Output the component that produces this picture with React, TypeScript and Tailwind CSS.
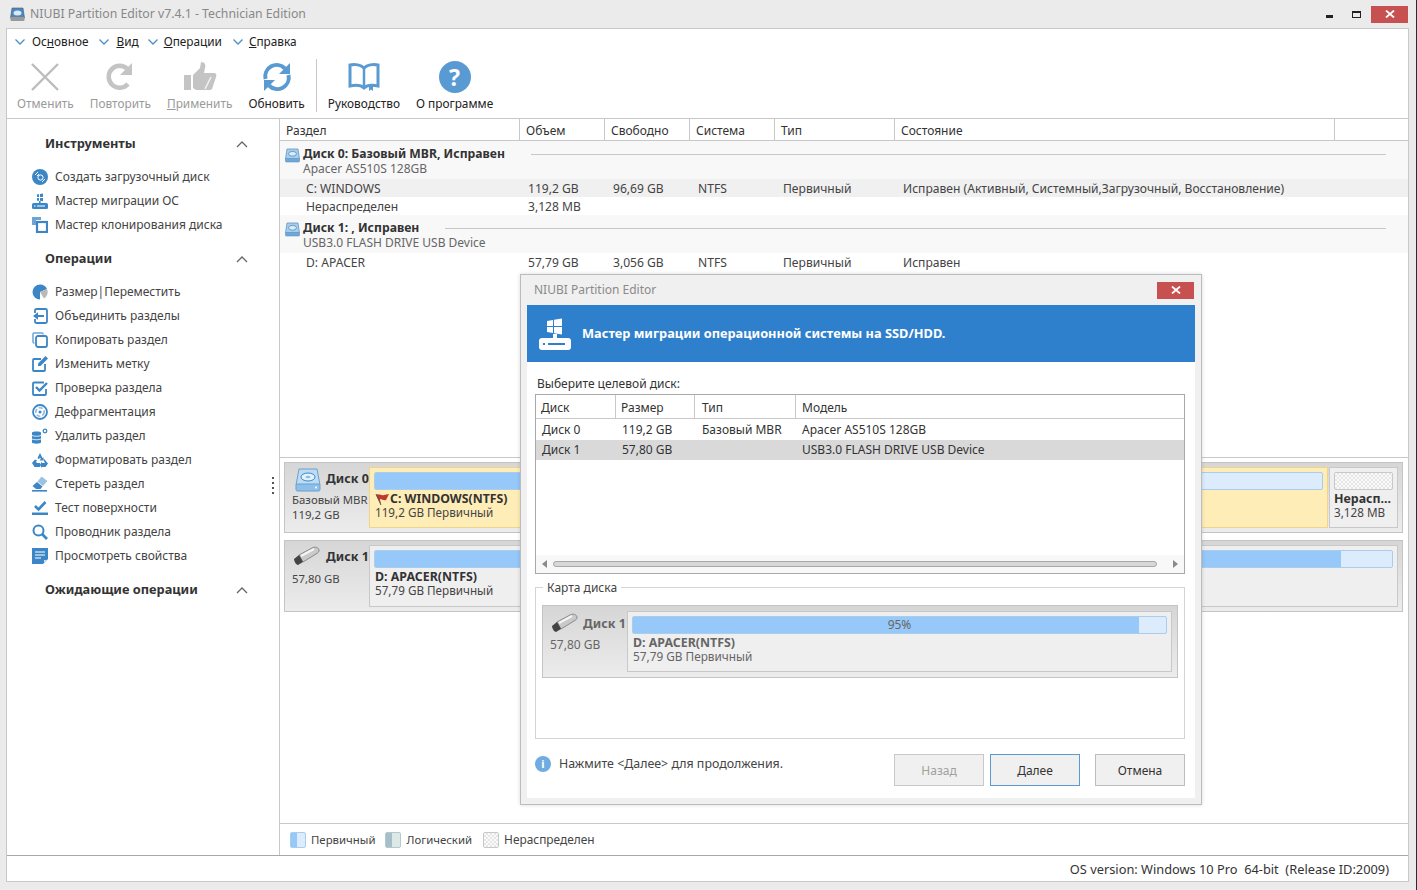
import type { ReactNode } from 'react';

const BLUE = '#3d86c6';

function Svg({ size = 16, children }: { size?: number; children: ReactNode }) {
  return (
    <svg width={size} height={size} viewBox="0 0 16 16" className="shrink-0">
      {children}
    </svg>
  );
}

const SIDE_ICONS: Record<string, ReactNode> = {
  boot: (
    <>
      <circle cx="8" cy="8" r="8" fill={BLUE} />
      <circle cx="8.5" cy="8.5" r="2.6" fill="none" stroke="#fff" strokeWidth="1" />
      <path d="M3 6l3-3M5 7l2-2M10 13l3-3" stroke="#fff" strokeWidth="1" />
    </>
  ),
  migrate: (
    <>
      <path d="M5 1.500l2-.4V4H5zM8 1l3-.6V4H8zM5 5h2v2.800H5zM8 5h3v3.200L8 7.800z" fill={BLUE} />
      <rect x="0" y="10" width="16" height="6" rx="1.500" fill={BLUE} />
      <rect x="2" y="12.500" width="1.500" height="1" fill="#fff" />
      <rect x="5" y="12.500" width="8" height="1" fill="#fff" />
      <rect x="7" y="8" width="1.600" height="2" fill={BLUE} />
    </>
  ),
  clone: (
    <>
      <path d="M0 0h9v3H4v5H0z" fill="#6ea4d4" />
      <rect x="5" y="5" width="10" height="10" fill="none" stroke={BLUE} strokeWidth="2.200" />
    </>
  ),
  resize: (
    <>
      <path d="M8 0.500A7.500 7.500 0 1 0 8 15.500z" fill={BLUE} />
      <path d="M8 0.500A7.500 7.500 0 0 1 15 5L8 8z" fill={BLUE} />
      <path d="M8 8l7-3a7.500 7.500 0 0 1-3 9.500z" fill="#b9b9b9" />
    </>
  ),
  merge: (
    <>
      <path d="M3 5V2.500A1.500 1.500 0 0 1 4.500 1h9A1.500 1.500 0 0 1 15 2.500v11a1.500 1.500 0 0 1-1.500 1.500h-9A1.500 1.500 0 0 1 3 13.500V11" fill="none" stroke={BLUE} strokeWidth="1.800" />
      <path d="M1 8l5-3.800V7h6v2H6v2.800z" fill={BLUE} />
    </>
  ),
  copy: (
    <>
      <path d="M11 2.500V2a1 1 0 0 0-1-1H2a1 1 0 0 0-1 1v8a1 1 0 0 0 1 1h.5" fill="none" stroke="#6ea4d4" strokeWidth="1.500" />
      <rect x="4" y="4" width="11" height="11" rx="2" fill="none" stroke={BLUE} strokeWidth="1.800" />
    </>
  ),
  label: (
    <>
      <path d="M9 3H2a1 1 0 0 0-1 1v10a1 1 0 0 0 1 1h10a1 1 0 0 0 1-1V8" fill="none" stroke={BLUE} strokeWidth="1.800" />
      <path d="M13.500 0L16 2.500 8.500 10H6V7.500z" fill={BLUE} />
    </>
  ),
  check: (
    <>
      <path d="M12 2.500H2a1 1 0 0 0-1 1V14a1 1 0 0 0 1 1h11a1 1 0 0 0 1-1V9" fill="none" stroke={BLUE} strokeWidth="1.800" />
      <path d="M4 7l3.500 3.500L15 3" fill="none" stroke={BLUE} strokeWidth="2.400" />
    </>
  ),
  defrag: (
    <>
      <circle cx="8" cy="8" r="7" fill="none" stroke={BLUE} strokeWidth="1.800" />
      <circle cx="8" cy="8" r="4.200" fill="none" stroke="#8db8de" strokeWidth="1.600" strokeDasharray="4 2" />
      <circle cx="8" cy="8" r="1.500" fill={BLUE} />
    </>
  ),
  del: (
    <>
      <path d="M0 4.500C0 3 9 3 9 4.500v10C9 16 0 16 0 14.500z" fill={BLUE} />
      <path d="M0 7.500c2 1 7 1 9 0M0 11c2 1 7 1 9 0" fill="none" stroke="#fff" strokeWidth="0.800" />
      <circle cx="13" cy="3" r="1.800" fill="none" stroke={BLUE} strokeWidth="1.300" />
    </>
  ),
  format: (
    <path d="M5.500 6L8 1 10.500 6l1.300-.7L11 8.500H7.800l1-1.700L8 5.500l-1 1.800zM3 7.500l2.300 1.300L4 9.500l.8 1.500H8v4H2.500L0 11zM12.200 7l3.800 4.500L13.500 15H10v1L7.800 13 10 9.500V11h3l-1.800-3.200z" fill={BLUE} />
  ),
  erase: (
    <>
      <path d="M9.500 0.500L15.500 5 11 10 5.500 5.500z" fill="#9cc2e3" />
      <path d="M5 6l5.500 4.500L8.500 13H4L0.500 10z" fill={BLUE} />
      <rect x="0" y="14" width="15" height="1.600" fill={BLUE} />
    </>
  ),
  surface: (
    <>
      <path d="M3 6l3.500 3.500L13.500 2" fill="none" stroke={BLUE} strokeWidth="2.600" />
      <rect x="0" y="12.500" width="16" height="2.500" fill={BLUE} />
    </>
  ),
  explore: (
    <>
      <circle cx="6.500" cy="6.500" r="5" fill="none" stroke={BLUE} strokeWidth="2" />
      <path d="M10 10l5 5" stroke={BLUE} strokeWidth="2.600" />
    </>
  ),
  props: (
    <>
      <path d="M0 0h16v11l-5 5H0z" fill={BLUE} />
      <path d="M3 4h10M3 7h10M3 10h6" stroke="#fff" strokeWidth="1.200" />
      <path d="M12 12h3l-3 3z" fill="#cfe1f1" />
    </>
  ),
};

const TOOLS = [
  { icon: 'boot', label: 'Создать загрузочный диск' },
  { icon: 'migrate', label: 'Мастер миграции ОС' },
  { icon: 'clone', label: 'Мастер клонирования диска' },
];

const OPERATIONS = [
  { icon: 'resize', label: 'Размер|Переместить' },
  { icon: 'merge', label: 'Объединить разделы' },
  { icon: 'copy', label: 'Копировать раздел' },
  { icon: 'label', label: 'Изменить метку' },
  { icon: 'check', label: 'Проверка раздела' },
  { icon: 'defrag', label: 'Дефрагментация' },
  { icon: 'del', label: 'Удалить раздел' },
  { icon: 'format', label: 'Форматировать раздел' },
  { icon: 'erase', label: 'Стереть раздел' },
  { icon: 'surface', label: 'Тест поверхности' },
  { icon: 'explore', label: 'Проводник раздела' },
  { icon: 'props', label: 'Просмотреть свойства' },
];

function MenuChevron() {
  return (
    <svg width="10" height="6" viewBox="0 0 10 6" className="shrink-0">
      <path d="M0.500 0.500L5 5l4.500-4.500" fill="none" stroke="#4d8ec9" strokeWidth="1.300" />
    </svg>
  );
}

function Menu() {
  return (
    <div className="flex h-[26px] items-center pl-[8px] text-[11.8px] text-[#222]">
      <span className="flex items-center gap-[7px]">
        <MenuChevron />
        <span>Ос<u>н</u>овное</span>
      </span>
      <span className="ml-[11px] flex items-center gap-[7px]">
        <MenuChevron />
        <span><u>В</u>ид</span>
      </span>
      <span className="ml-[9px] flex items-center gap-[6px]">
        <MenuChevron />
        <span><u>О</u>перации</span>
      </span>
      <span className="ml-[11px] flex items-center gap-[6px]">
        <MenuChevron />
        <span><u>С</u>правка</span>
      </span>
    </div>
  );
}

function ToolButton({ icon, label, muted }: { icon: ReactNode; label: ReactNode; muted?: boolean }) {
  return (
    <div className="mt-[5px] flex flex-col items-center">
      <div className="flex h-[34px] items-center justify-center">{icon}</div>
      <span className={`mt-px text-[11.85px] leading-[16px] whitespace-nowrap ${muted ? 'text-[#9a9a9a]' : 'text-[#222]'}`}>
        {label}
      </span>
    </div>
  );
}

function Toolbar() {
  return (
    <div className="flex items-start gap-4 pl-[10px]">
      <ToolButton
        muted
        label="Отменить"
        icon={
          <svg width="30" height="30" viewBox="0 0 30 30">
            <path d="M2 2l26 26M28 2L2 28" stroke="#bcbcbc" strokeWidth="2.400" />
          </svg>
        }
      />
      <ToolButton
        muted
        label="Повторить"
        icon={
          <svg width="28" height="30" viewBox="0 0 28 30">
            <path d="M22 22a11 11 0 1 1-.5-15" fill="none" stroke="#c4c4c4" strokeWidth="4.500" />
            <path d="M26 1v12H14z" fill="#c4c4c4" />
          </svg>
        }
      />
      <ToolButton
        muted
        label={<><u>П</u>рименить</>}
        icon={
          <svg width="34" height="32" viewBox="0 0 34 32">
            <rect x="1" y="14" width="7" height="15" fill="#c4c4c4" />
            <path d="M10 14l7-7 1-6c4 0 5 3 4 6l-1 5h10c2 0 3 2 2 4l-4 12c-1 1-2 1-3 1H13l-3-2z" fill="#c4c4c4" />
            <path d="M22 28l6-12" stroke="#f2f2f2" strokeWidth="1.500" />
          </svg>
        }
      />
      <ToolButton
        label="Обновить"
        icon={
          <svg width="30" height="30" viewBox="0 0 30 30">
            <path d="M3.500 17A11.500 11.500 0 0 1 23 6.500" fill="none" stroke="#5a9ad2" strokeWidth="4" />
            <path d="M28 1v11H17z" fill="#5a9ad2" />
            <path d="M26.500 13A11.500 11.500 0 0 1 7 23.500" fill="none" stroke="#5a9ad2" strokeWidth="4" />
            <path d="M2 29V18h11z" fill="#5a9ad2" />
          </svg>
        }
      />
      <div className="-mx-[5px] mt-[4px] h-[53px] w-px self-start bg-[#c8c8c8]" />
      <ToolButton
        label="Руководство"
        icon={
          <svg width="32" height="30" viewBox="0 0 32 30">
            <path d="M16 6C13 3 7 2 2 3v21c5-1 11-1 14 2 3-3 9-3 14-2V3c-5-1-11 0-14 3z" fill="none" stroke="#5a9ad2" strokeWidth="3" />
            <path d="M16 6v19" stroke="#5a9ad2" strokeWidth="2.500" />
            <path d="M25 24v5l-2-1.500-2 1.500v-5z" fill="#5a9ad2" />
          </svg>
        }
      />
      <ToolButton
        label="О программе"
        icon={
          <div className="flex h-[32px] w-[32px] items-center justify-center rounded-full bg-[#5a9ad2] text-[23px] leading-none font-bold text-white">
            ?
          </div>
        }
      />
    </div>
  );
}

function SideHeading({ label, className = '' }: { label: string; className?: string }) {
  return (
    <div className={`flex h-6 items-center justify-between pr-[31px] pl-[38px] ${className}`}>
      <span className="text-[12.8px] font-bold text-[#333]">{label}</span>
      <svg width="12" height="7" viewBox="0 0 12 7">
        <path d="M1 6l5-5 5 5" fill="none" stroke="#666" strokeWidth="1.300" />
      </svg>
    </div>
  );
}

function SideList({ items }: { items: { icon: string; label: string }[] }) {
  return (
    <div className="mt-[9px] flex flex-col">
      {items.map((item) => (
        <div key={item.label} className="flex h-6 items-center gap-[7px] pl-[25px] text-[12px] text-[#444]">
          <Svg>{SIDE_ICONS[item.icon]}</Svg>
          <span className="whitespace-nowrap">{item.label}</span>
        </div>
      ))}
    </div>
  );
}

function Sidebar() {
  return (
    <aside className="relative w-[273px] shrink-0 border-r border-[#c8c8c8] pt-[13px]">
      <SideHeading label="Инструменты" />
      <SideList items={TOOLS} />
      <SideHeading label="Операции" className="mt-[10px]" />
      <SideList items={OPERATIONS} />
      <SideHeading label="Ожидающие операции" className="mt-[10px]" />
      <div className="absolute top-[358px] left-[265px] flex flex-col gap-[3px]">
        <span className="h-[2px] w-[2px] bg-[#555]" />
        <span className="h-[2px] w-[2px] bg-[#555]" />
        <span className="h-[2px] w-[2px] bg-[#555]" />
        <span className="h-[2px] w-[2px] bg-[#555]" />
      </div>
    </aside>
  );
}

const COLS = 'grid grid-cols-[240px_85px_85px_85px_120px_440px_1fr]';

function DiskGlyph() {
  return (
    <svg width="15" height="15" viewBox="0 0 15 15" className="shrink-0">
      <path d="M2 1h11l1.500 10H0.500z" fill="#a9cdec" stroke="#5f95c4" strokeWidth="0.800" />
      <rect x="0.500" y="10.500" width="14" height="3.500" rx="0.800" fill="#6ea8d8" stroke="#5f95c4" strokeWidth="0.600" />
      <ellipse cx="7.500" cy="5.800" rx="4" ry="2.400" fill="#d9ebf9" stroke="#4f8bbf" strokeWidth="0.800" />
    </svg>
  );
}

function DiskRow({ title, sub }: { title: string; sub: string }) {
  return (
    <div className="flex h-[38px] bg-[#f8f8f8] pt-[6px] pl-[5px]">
      <div className="mt-px"><DiskGlyph /></div>
      <div className="ml-[3px] flex-1 pr-[22px]">
        <div className="flex h-[14px] items-center">
          <span className="text-[12.2px] leading-[14px] font-bold whitespace-nowrap text-[#333]">{title}</span>
          <span className="ml-[26px] h-px flex-1 bg-[#c8c8c8]" />
        </div>
        <div className="mt-px text-[12px] leading-[13px] text-[#666]">{sub}</div>
      </div>
    </div>
  );
}

function PartRow({ cells, shaded }: { cells: string[]; shaded?: boolean }) {
  return (
    <div className={`${COLS} h-[18px] items-center pt-[2px] text-[12.1px] leading-[16px] text-[#444] ${shaded ? 'bg-[#f0f0f0]' : ''}`}>
      {cells.map((cell, i) => (
        <span key={i} className={`whitespace-nowrap ${i === 0 ? 'pl-[26px]' : 'pl-[8px]'}`}>{cell}</span>
      ))}
    </div>
  );
}

function PartitionTable() {
  const heads = ['Раздел', 'Объем', 'Свободно', 'Система', 'Тип', 'Состояние', ''];
  return (
    <div className="h-[339px] shrink-0 border-b border-[#c8c8c8]">
      <div className={`${COLS} h-[22px] border-b border-[#c8c8c8] text-[12px] text-[#333]`}>
        {heads.map((h, i) => (
          <span key={i} className={`flex items-center pt-[2px] pl-[6px] ${i < 6 ? 'border-r border-[#c8c8c8]' : ''}`}>{h}</span>
        ))}
      </div>
      <DiskRow title="Диск 0: Базовый MBR, Исправен" sub="Apacer AS510S 128GB" />
      <PartRow shaded cells={['C: WINDOWS', '119,2 GB', '96,69 GB', 'NTFS', 'Первичный', 'Исправен (Активный, Системный,Загрузочный, Восстановление)']} />
      <PartRow cells={['Нераспределен', '3,128 MB']} />
      <DiskRow title="Диск 1: , Исправен" sub="USB3.0 FLASH DRIVE USB Device" />
      <PartRow cells={['D: APACER', '57,79 GB', '3,056 GB', 'NTFS', 'Первичный', 'Исправен']} />
    </div>
  );
}

function HddPicture() {
  return (
    <svg width="26" height="24" viewBox="0 0 26 24" className="shrink-0">
      <path d="M4 1h18l3 16H1z" fill="#bcdcf6" stroke="#6aa0cc" />
      <rect x="1" y="16" width="24" height="7" rx="1.500" fill="#8cc0ea" stroke="#6aa0cc" />
      <ellipse cx="13" cy="9" rx="7" ry="4" fill="#e4f2fc" stroke="#3f86bd" />
      <ellipse cx="13" cy="9" rx="2.500" ry="1.300" fill="#8cc0ea" />
      <circle cx="21" cy="19.500" r="1" fill="#fff" />
    </svg>
  );
}

function UsbPicture() {
  return (
    <svg width="28" height="20" viewBox="0 0 28 20" className="shrink-0">
      <path d="M7 9L20 2c3-2 7 0 7 2 0 2-1 3-3 4L11 16z" fill="#c9c9c9" stroke="#777" strokeWidth="0.800" />
      <path d="M9 10l13-7" stroke="#f4f4f4" strokeWidth="2" />
      <path d="M2 13l5-4 4 7-5 3c-2 0-4-4-4-6z" fill="#444" />
    </svg>
  );
}

function RedFlag() {
  return (
    <svg width="15" height="14" viewBox="0 0 15 14" className="shrink-0">
      <path d="M6 13L1 3c3-2 5 1 8 0l5-1-3 6c-2 1-4-1-6-1" fill="#c0392b" />
      <path d="M1 2l5 11" stroke="#555" strokeWidth="1" />
    </svg>
  );
}

function UsageBar({ fill, label }: { fill: string; label?: string }) {
  return (
    <div className="relative h-[18px] overflow-hidden rounded-[2px] border border-[#a9cdeb] bg-[#dcecfd]">
      <div className={`h-full bg-[#96c8fa] ${fill}`} />
      {label && (
        <span className="absolute inset-0 flex items-center justify-center text-[12px] text-[#666]">{label}</span>
      )}
    </div>
  );
}

function DiskMap() {
  return (
    <div className="flex-1 pt-[4px] pr-[5px] pl-[4px]">
      <div className="flex h-[71px] border border-[#c4c4c4] bg-gradient-to-b from-[#d6d6d6] to-[#ececec] p-[4px]">
        <div className="w-[80px] shrink-0 pl-[3px] text-[11.4px] leading-[14px] text-[#444]">
          <div className="flex h-[26px] items-center gap-[5px] pl-[3px]">
            <HddPicture />
            <span className="-mt-[2px] text-[12.500px] font-bold whitespace-nowrap text-[#333]">Диск 0</span>
          </div>
          <div className="whitespace-nowrap">Базовый MBR</div>
          <div className="mt-px">119,2 GB</div>
        </div>
        <div className="flex-1 border border-[#f0d48a] bg-[#ffedb8] p-[4px]">
          <UsageBar fill="w-[20%]" />
          <div className="mt-[2px] flex h-[13px] items-center pl-px text-[12.3px] leading-[13px] font-bold text-[#333]">
            <RedFlag />
            <span>C: WINDOWS(NTFS)</span>
          </div>
          <div className="pl-px text-[11.7px] leading-[14px] text-[#444]">119,2 GB Первичный</div>
        </div>
        <div className="ml-px w-[69px] shrink-0 border border-[#c8c8c8] bg-[#efefef] p-[4px]">
          <div className="h-[18px] rounded-[2px] border border-[#c8c8c8] bg-[repeating-conic-gradient(#e6e6e6_0_25%,#fafafa_0_50%)] bg-[length:4px_4px]" />
          <div className="mt-[2px] text-[12.4px] leading-[13px] font-bold whitespace-nowrap text-[#333]">Нерасп...</div>
          <div className="text-[11.7px] leading-[14px] text-[#444]">3,128 MB</div>
        </div>
      </div>
      <div className="mt-[7px] flex h-[72px] border border-[#c4c4c4] bg-gradient-to-b from-[#d6d6d6] to-[#ececec] p-[4px]">
        <div className="w-[80px] shrink-0 pl-[3px] text-[11.4px] leading-[15px] text-[#444]">
          <div className="flex h-[22px] items-center gap-[6px]">
            <UsbPicture />
            <span className="text-[12.500px] font-bold whitespace-nowrap text-[#333]">Диск 1</span>
          </div>
          <div className="mt-[4px]">57,80 GB</div>
        </div>
        <div className="flex-1 border border-[#c8c8c8] bg-[#efefef] p-[4px]">
          <UsageBar fill="w-[95%]" />
          <div className="mt-[2px] pl-px text-[12.4px] leading-[13px] font-bold text-[#333]">D: APACER(NTFS)</div>
          <div className="pl-px text-[11.7px] leading-[14px] text-[#444]">57,79 GB Первичный</div>
        </div>
      </div>
    </div>
  );
}

function Legend() {
  return (
    <div className="flex h-[32px] shrink-0 items-center border-t border-[#c8c8c8] pl-[10px] text-[11.4px] text-[#444]">
      <span className="h-4 w-4 rounded-[2px] border border-[#a9cdeb] bg-gradient-to-r from-[#96c8fa] from-45% to-[#dcecfd] to-45%" />
      <span className="ml-[5px]">Первичный</span>
      <span className="ml-[10px] h-4 w-4 rounded-[2px] border border-[#b5c9c9] bg-gradient-to-r from-[#a6bfcc] from-45% to-[#dce9e6] to-45%" />
      <span className="ml-[5px]">Логический</span>
      <span className="ml-[11px] h-4 w-4 rounded-[2px] border border-[#c8c8c8] bg-[repeating-conic-gradient(#e6e6e6_0_25%,#fafafa_0_50%)] bg-[length:4px_4px]" />
      <span className="ml-[5px] text-[11.9px]">Нераспределен</span>
    </div>
  );
}

function CloseButton({ className = '' }: { className?: string }) {
  return (
    <div className={`flex h-[17px] w-[37px] items-center justify-center bg-[#c75050] ${className}`}>
      <svg width="10" height="8" viewBox="0 0 10 8">
        <path d="M1 0.500l8 7M9 0.500l-8 7" stroke="#fff" strokeWidth="1.800" />
      </svg>
    </div>
  );
}

function DialogButton({ label, kind }: { label: string; kind?: 'disabled' | 'primary' }) {
  const tone =
    kind === 'disabled'
      ? 'border-[#c8c8c8] text-[#a0a0a0]'
      : kind === 'primary'
        ? 'border-[#5a9ad2] text-[#333]'
        : 'border-[#bdbdbd] text-[#333]';
  return (
    <div className={`flex h-[32px] w-[90px] items-center justify-center border bg-[#f0f0f0] pt-[2px] text-[12px] ${tone}`}>
      {label}
    </div>
  );
}

function MigrationDialog() {
  const heads = [
    { label: 'Диск', cls: 'pl-[5px]' },
    { label: 'Размер', cls: 'pl-[5px]' },
    { label: 'Тип', cls: 'pl-[7px]' },
    { label: 'Модель', cls: 'pl-[6px]' },
  ];
  const cols = 'grid grid-cols-[80px_79px_101px_1fr]';
  return (
    <div className="absolute top-[274px] left-[520px] h-[531px] w-[682px] border border-[#bcbcbc] bg-[#f0f0f0] px-[6px] shadow-[0_0_4px_rgba(0,0,0,0.15)]">
      <div className="flex h-[30px] items-center justify-between pl-[7px]">
        <span className="text-[12px] text-[#8a8a8a]">NIUBI Partition Editor</span>
        <CloseButton className="mr-[1px]" />
      </div>
      <div className="flex h-[493px] flex-col bg-white">
        <div className="flex h-[57px] shrink-0 items-center gap-[10px] bg-[#2f80cc] pl-[11px]">
          <svg width="34" height="32" viewBox="0 0 34 32" className="shrink-0">
            <path d="M9 3l6-1v6H9zM16 1.800L24 0.500V8h-8zM9 9h6v6l-6-1zM16 9h8v7.500l-8-1.300z" fill="#fff" />
            <rect x="1" y="20" width="32" height="12" rx="3" fill="#fff" />
            <rect x="15" y="16" width="4" height="5" fill="#fff" />
            <rect x="5" y="25" width="2" height="2" fill="#2f80cc" />
            <rect x="10" y="25" width="17" height="2" fill="#2f80cc" />
          </svg>
          <span className="text-[12.8px] font-bold whitespace-nowrap text-white">
            Мастер миграции операционной системы на SSD/HDD.
          </span>
        </div>
        <div className="flex flex-1 flex-col pr-[10px] pl-[8px]">
          <div className="mt-[14px] pl-[2px] text-[12px] leading-[16px] text-[#333]">Выберите целевой диск:</div>
          <div className="relative mt-[2px] h-[180px] shrink-0 border border-[#a8a8a8] text-[12px] text-[#333]">
            <div className={`${cols} h-[24px] border-b border-[#c8c8c8]`}>
              {heads.map((h, i) => (
                <span key={h.label} className={`flex items-center pt-[2px] ${h.cls} ${i < 3 ? 'border-r border-[#c8c8c8]' : ''}`}>{h.label}</span>
              ))}
            </div>
            <div className={`${cols} h-[21px] items-center`}>
              <span className="pl-[6px]">Диск 0</span>
              <span className="pl-[6px]">119,2 GB</span>
              <span className="pl-[7px]">Базовый MBR</span>
              <span className="pl-[6px]">Apacer AS510S 128GB</span>
            </div>
            <div className={`${cols} h-[20px] items-center bg-[#d9d9d9]`}>
              <span className="pl-[6px]">Диск 1</span>
              <span className="pl-[6px]">57,80 GB</span>
              <span />
              <span className="pl-[6px]">USB3.0 FLASH DRIVE USB Device</span>
            </div>
            <div className="absolute right-0 bottom-0 left-0 flex h-[18px] items-center bg-[#f8f8f8] px-[6px]">
              <span className="h-0 w-0 border-y-[4px] border-r-[5px] border-y-transparent border-r-[#8a8a8a]" />
              <span className="mr-[16px] ml-[6px] h-[6px] flex-1 rounded-full border border-[#a8a8a8] bg-[#d8d8d8]" />
              <span className="h-0 w-0 border-y-[4px] border-l-[5px] border-y-transparent border-l-[#8a8a8a]" />
            </div>
          </div>
          <div className="relative mt-[13px] h-[152px] shrink-0 border border-[#d4d4d4] px-[6px] pt-[17px]">
            <span className="absolute -top-[8px] left-[7px] bg-white px-[4px] text-[12px] leading-[16px] text-[#444]">Карта диска</span>
            <div className="flex h-[73px] border border-[#c4c4c4] bg-gradient-to-b from-[#d6d6d6] to-[#ececec] p-[5px]">
              <div className="w-[79px] shrink-0 pl-[2px] text-[12px] leading-[15px] text-[#666]">
                <div className="flex h-[24px] items-center gap-[5px]">
                  <UsbPicture />
                  <span className="text-[12.500px] font-bold whitespace-nowrap text-[#666]">Диск 1</span>
                </div>
                <div className="mt-[2px]">57,80 GB</div>
              </div>
              <div className="flex-1 border border-[#c8c8c8] bg-[#efefef] p-[4px]">
                <UsageBar fill="w-[95%]" label="95%" />
                <div className="mt-[2px] pl-px text-[12.4px] leading-[13px] font-bold text-[#666]">D: APACER(NTFS)</div>
                <div className="pl-px text-[11.8px] leading-[14px] text-[#666]">57,79 GB Первичный</div>
              </div>
            </div>
          </div>
          <div className="mt-[15px] flex h-[32px] items-center">
            <div className="-mt-[12px] flex items-center">
              <span className="flex h-4 w-4 items-center justify-center rounded-full bg-[#70acdf] text-[11px] leading-none font-bold text-white">i</span>
              <span className="ml-[8px] text-[12.4px] text-[#444]">Нажмите &lt;Далее&gt; для продолжения.</span>
            </div>
            <div className="ml-auto flex">
              <DialogButton label="Назад" kind="disabled" />
              <div className="ml-[6px]"><DialogButton label="Далее" kind="primary" /></div>
              <div className="ml-[15px]"><DialogButton label="Отмена" /></div>
            </div>
          </div>
        </div>
      </div>
    </div>
  );
}

export default function App() {
  return (
    <div className="relative flex h-[890px] w-[1417px] flex-col overflow-hidden border-r border-[#2a2a3a] bg-[#ebebeb] font-['Noto_Sans','Liberation_Sans',sans-serif]">
      <div className="flex h-[28px] shrink-0 items-center pl-[10px]">
        <svg width="15" height="15" viewBox="0 0 15 15" className="shrink-0">
          <path d="M2 1h11l1.500 10H0.500z" fill="#4f86ba" stroke="#3a5f86" strokeWidth="0.600" />
          <rect x="0.500" y="10" width="14" height="4" rx="1" fill="#9a9a9a" />
          <ellipse cx="7.500" cy="6" rx="4" ry="2.500" fill="#dbe9f5" />
        </svg>
        <span className="ml-[5px] text-[12.250px] whitespace-nowrap text-[#888]">NIUBI Partition Editor v7.4.1 - Technician Edition</span>
        <div className="mr-[8px] ml-auto flex items-center">
          <span className="mt-[4px] h-[3px] w-[7px] bg-[#222]" />
          <span className="ml-[19px] h-[7px] w-[9px] border border-t-[2px] border-[#222]" />
          <CloseButton className="ml-[10px]" />
        </div>
      </div>
      <div className="mr-[7px] ml-[6px] flex h-[854px] shrink-0 flex-col border border-[#c8c8c8] bg-white">
        <div className="h-[90px] shrink-0 border-b border-[#c8c8c8]">
          <Menu />
          <Toolbar />
        </div>
        <div className="flex h-[737px] shrink-0 border-b border-[#a8a8a8]">
          <Sidebar />
          <div className="flex flex-1 flex-col">
            <PartitionTable />
            <DiskMap />
            <Legend />
          </div>
        </div>
        <div className="flex flex-1 items-center justify-end pt-[2px] pr-[19px] text-[12.8px] whitespace-pre text-[#333]">
          OS version: Windows 10 Pro  64-bit  (Release ID:2009)
        </div>
      </div>
      <MigrationDialog />
    </div>
  );
}
